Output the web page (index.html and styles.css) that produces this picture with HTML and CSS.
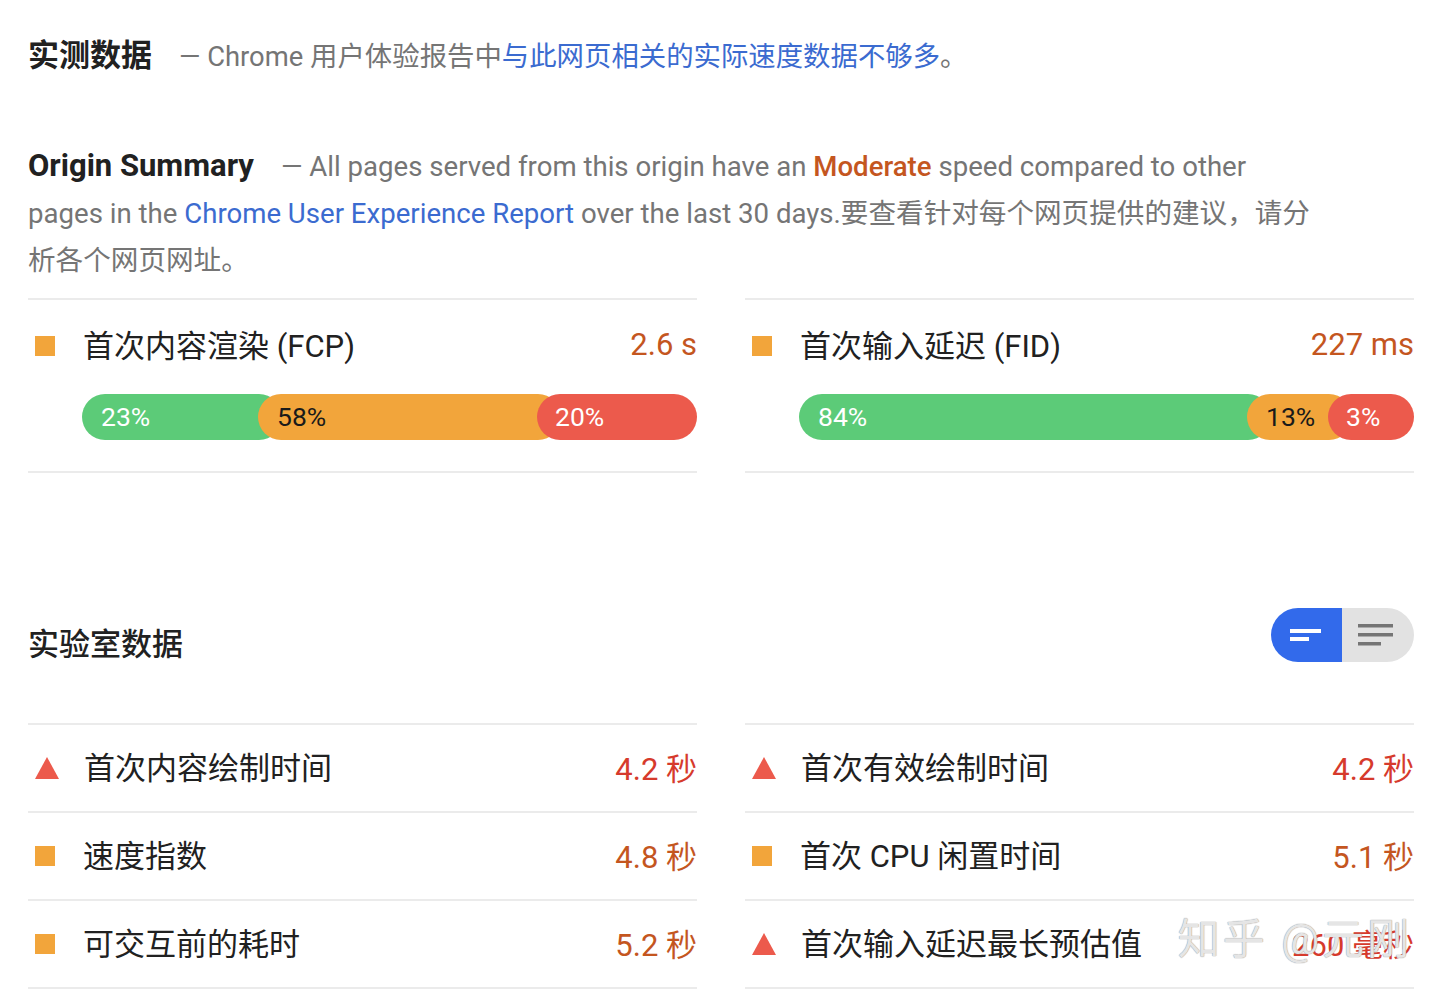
FILE: index.html
```html
<!DOCTYPE html>
<html lang="zh">
<head>
<meta charset="utf-8">
<title>Lighthouse</title>
<link rel="stylesheet" href="styles.css">
</head>
<body>
<section class="field">
  <div class="field-head">
    <span class="title">实测数据</span>
    <span class="desc">— Chrome 用户体验报告中<span class="link">与此网页相关的实际速度数据不够多</span>。</span>
  </div>
  <p class="origin"><span class="origin-title">Origin Summary</span>— All pages served from this origin have an <span class="moderate">Moderate</span> speed compared to other pages in the <span class="link">Chrome User Experience Report</span> over the last 30 days.要查看针对每个网页提供的建议，请分析各个网页网址。</p>

  <div class="metric-grid">
    <div class="metric">
      <div class="metric-head">
        <span class="sq"></span>
        <span class="label">首次内容渲染 (FCP)</span>
        <span class="value">2.6 s</span>
      </div>
      <div class="bar">
        <div class="seg good" style="width:200px">23%</div>
        <div class="seg avg" style="width:303px">58%</div>
        <div class="seg poor" style="width:160px">20%</div>
      </div>
    </div>
    <div class="metric">
      <div class="metric-head">
        <span class="sq"></span>
        <span class="label">首次输入延迟 (FID)</span>
        <span class="value">227 ms</span>
      </div>
      <div class="bar">
        <div class="seg good" style="width:472px">84%</div>
        <div class="seg avg" style="width:105px">13%</div>
        <div class="seg poor" style="width:86px">3%</div>
      </div>
    </div>
  </div>
</section>

<section class="lab">
  <div class="lab-head">
    <span class="lab-title">实验室数据</span>
    <div class="toggle">
      <span class="tg on">
        <svg width="34" height="20" viewBox="0 0 34 20"><rect x="3" y="4" width="31" height="4" fill="#fff"/><rect x="3" y="12" width="19" height="4" fill="#fff"/></svg>
      </span>
      <span class="tg off">
        <svg width="40" height="28" viewBox="0 0 40 28"><rect x="3" y="3" width="35" height="3.5" fill="#757575"/><rect x="3" y="12" width="35" height="3.5" fill="#757575"/><rect x="3" y="21" width="23" height="3.5" fill="#757575"/></svg>
      </span>
    </div>
  </div>
  <div class="lab-grid">
    <div class="lab-row"><span class="tri"></span><span class="label">首次内容绘制时间</span><span class="value red">4.2 秒</span></div>
    <div class="lab-row"><span class="tri"></span><span class="label">首次有效绘制时间</span><span class="value red">4.2 秒</span></div>
    <div class="lab-row"><span class="sq"></span><span class="label">速度指数</span><span class="value">4.8 秒</span></div>
    <div class="lab-row"><span class="sq"></span><span class="label">首次 CPU 闲置时间</span><span class="value">5.1 秒</span></div>
    <div class="lab-row"><span class="sq"></span><span class="label">可交互前的耗时</span><span class="value">5.2 秒</span></div>
    <div class="lab-row"><span class="tri"></span><span class="label">首次输入延迟最长预估值</span><span class="value red">260 毫秒</span><span class="watermark">知乎 @元刚</span></div>
  </div>
</section>
</body>
</html>
```

FILE: styles.css
```css
html, body {
  margin: 0;
  background: #fff;
}
body {
  padding: 0 26px 0 28px;
  font-family: Roboto, "Noto Sans CJK SC", sans-serif;
  color: #212121;
}
.field-head {
  padding-top: 36px;
  height: 40px;
  line-height: 40px;
  display: flex;
  align-items: baseline;
}
.title {
  font-size: 31px;
  font-weight: 700;
  color: #212121;
}
.desc {
  font-size: 27.4px;
  color: #757575;
  margin-left: 27px;
}
.link {
  color: #3b6bd0;
}
.moderate {
  color: #c4561f;
  font-weight: 500;
}
.origin {
  margin: 66px 0 0;
  width: 1286px;
  font-size: 27.6px;
  line-height: 47px;
  color: #757575;
}
.origin-title {
  font-size: 31px;
  font-weight: 700;
  color: #212121;
  margin-right: 27px;
}
.metric-grid {
  margin-top: 14px;
  display: grid;
  grid-template-columns: 1fr 1fr;
  column-gap: 48px;
}
.metric {
  border-top: 2px solid #ebebeb;
  border-bottom: 2px solid #ebebeb;
  padding: 26px 0 31px;
}
.metric-head {
  display: flex;
  align-items: center;
  height: 40px;
}
.sq {
  width: 20px;
  height: 20px;
  background: #f2a53b;
  margin-left: 7px;
  margin-right: 28px;
  flex: none;
}
.label {
  font-size: 31px;
  color: #212121;
  flex: 1;
  white-space: nowrap;
  padding-bottom: 5px;
}
.value {
  font-size: 31px;
  color: #c4561f;
  white-space: nowrap;
  padding-bottom: 3px;
}
.value.red {
  color: #d63a2c;
}
.bar {
  margin: 28px 0 0 54px;
  height: 46px;
  display: flex;
}
.seg {
  height: 46px;
  border-radius: 23px;
  box-sizing: border-box;
  padding-left: 19px;
  font-size: 26.5px;
  line-height: 46px;
  flex: none;
  position: relative;
}
.seg + .seg {
  margin-left: -24px;
}
.good { background: #5ccb78; color: #fff; z-index: 1; }
.avg { background: #f2a53b; color: #1a1a1a; z-index: 2; }
.poor { background: #ec5a4c; color: #fff; z-index: 3; padding-left: 18px; }

.lab-head {
  margin-top: 135px;
  height: 54px;
  display: flex;
  align-items: center;
  justify-content: space-between;
}
.lab-title {
  font-size: 31px;
  font-weight: 500;
  color: #212121;
  padding-top: 12px;
}
.toggle {
  display: flex;
  width: 143px;
  height: 54px;
  border-radius: 27px;
  overflow: hidden;
}
.tg {
  display: flex;
  align-items: center;
  justify-content: center;
}
.tg.on {
  width: 71px;
  background: #326aeb;
  padding-right: 6px;
  box-sizing: border-box;
}
.tg.off {
  width: 72px;
  background: #e2e2e2;
  padding-right: 6px;
  box-sizing: border-box;
}
.lab-grid {
  margin-top: 61px;
  display: grid;
  grid-template-columns: 1fr 1fr;
  column-gap: 48px;
}
.lab-row {
  border-top: 2px solid #ebebeb;
  height: 86px;
  display: flex;
  align-items: center;
  position: relative;
}
.lab-row:nth-last-child(-n+2) {
  border-bottom: 2px solid #ebebeb;
}
.tri {
  width: 0;
  height: 0;
  border-left: 12px solid transparent;
  border-right: 12px solid transparent;
  border-bottom: 22px solid #ec5a4c;
  margin-left: 7px;
  margin-right: 25px;
  flex: none;
}
.watermark {
  position: absolute;
  right: 2px;
  top: 12px;
  font-size: 42px;
  line-height: 54px;
  color: rgba(255, 255, 255, 0.75);
  text-shadow: 0 0 1px #9a9a9a, 0 0 1px #9a9a9a;
  letter-spacing: 3px;
  pointer-events: none;
}
```
